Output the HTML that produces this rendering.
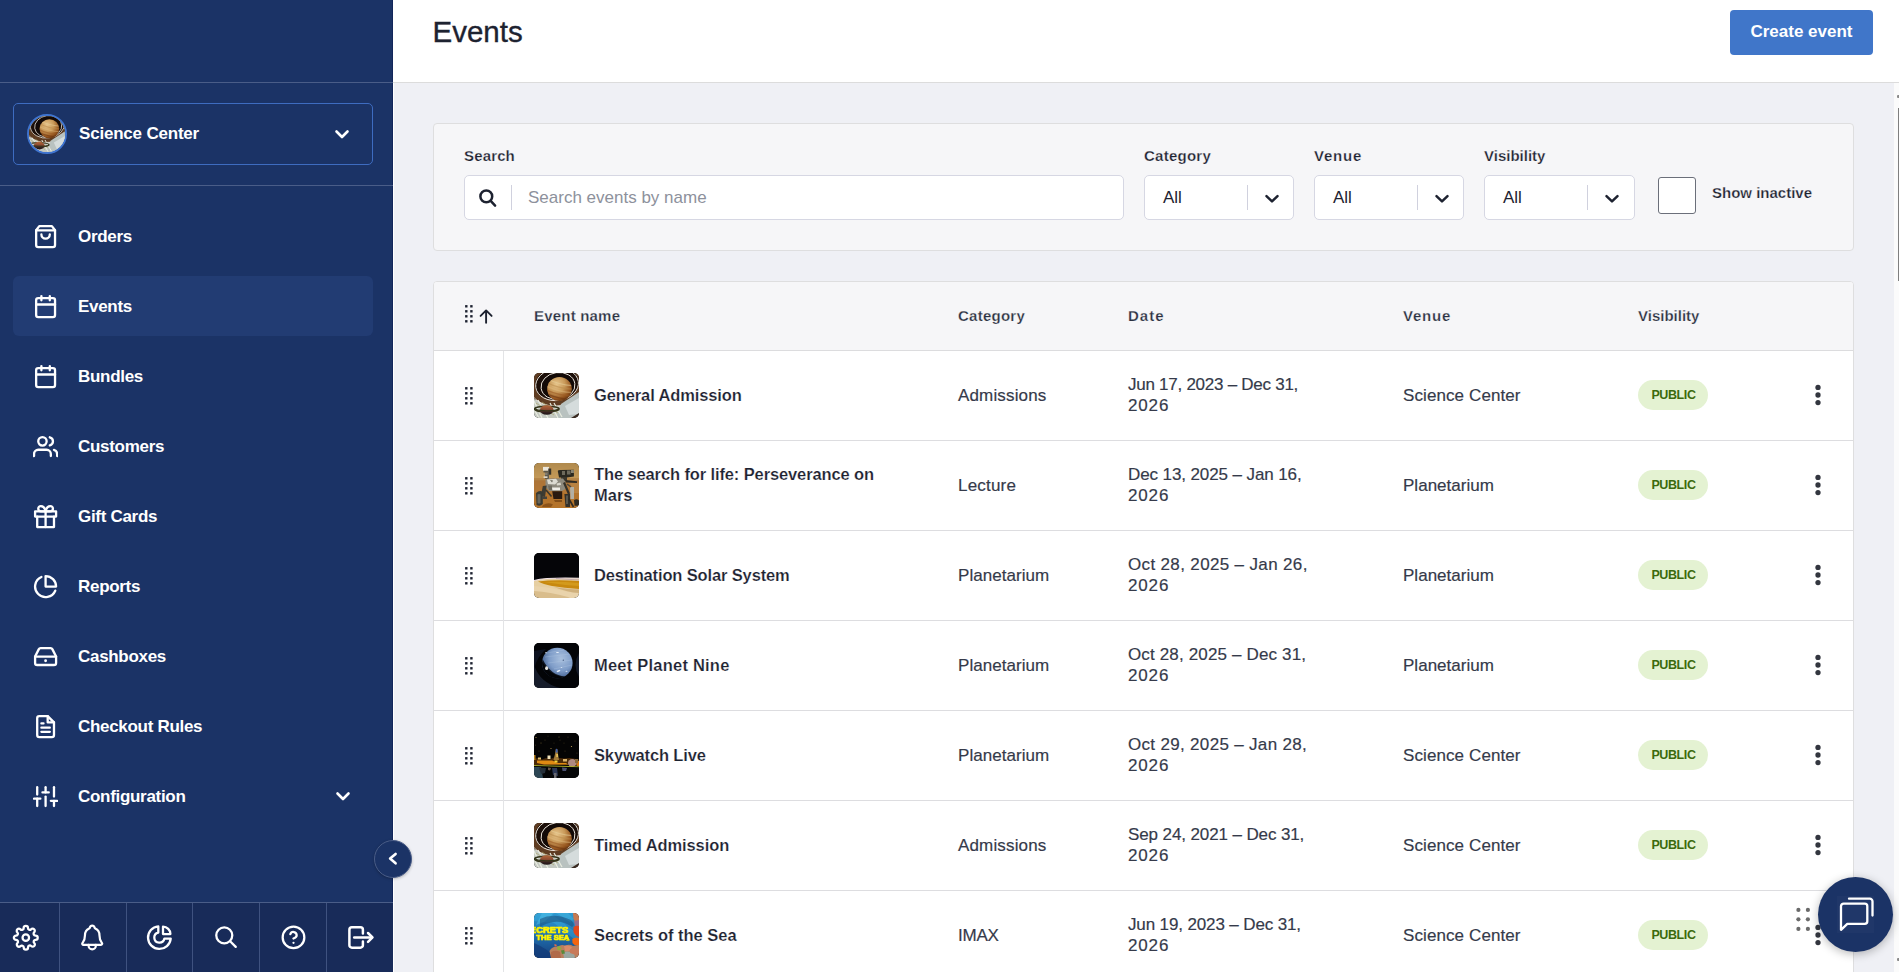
<!DOCTYPE html>
<html lang="en">
<head>
<meta charset="utf-8">
<title>Events</title>
<style>
*{box-sizing:border-box;margin:0;padding:0}
html,body{width:1899px;height:972px;overflow:hidden;background:#eff0f5;font-family:"Liberation Sans",sans-serif;color:#1d2230}
body{position:relative}
.abs{position:absolute}
/* ---------- sidebar ---------- */
#side{position:absolute;left:0;top:0;width:393px;height:972px;background:#1b3366;border-right:1px solid #12265a}
#side .hr{position:absolute;left:0;width:393px;height:1px;background:#4a5d88}
#org{position:absolute;left:13px;top:103px;width:360px;height:62px;border:1px solid #3e6cc0;border-radius:5px}
#org .av{position:absolute;left:13px;top:10px;width:40px;height:40px;border-radius:50%;border:2px solid #3f74cf;overflow:hidden;background:#c9c5b8}
#org .nm{position:absolute;left:65px;top:19px;letter-spacing:-.2px;font-size:17px;font-weight:700;color:#fff;line-height:22px;white-space:nowrap}
.nav{position:absolute;left:13px;width:360px;height:60px;border-radius:6px}
.nav.on{background:#223c73}
.nav .tx{position:absolute;left:65px;top:20px;letter-spacing:-.3px;font-size:17px;font-weight:700;color:#fff;line-height:22px;white-space:nowrap}
.nav svg.ic{position:absolute;left:20px;top:17.5px;width:25.2px;height:25.2px;fill:none;stroke:#fff;stroke-width:2.2;stroke-linecap:round;stroke-linejoin:round}
#bbar{position:absolute;left:0;top:902px;width:393px;height:70px;background:#182b59;border-top:1px solid #4a5d88}
#bbar .c{position:absolute;top:0;height:70px;border-left:1px solid #3f5280}
#bbar svg{position:absolute;fill:none;stroke:#fff;stroke-width:2.2;stroke-linecap:round;stroke-linejoin:round}
#coll{z-index:5;position:absolute;left:374px;top:839.5px;width:38px;height:38px;border-radius:50%;background:#1b3366;border:1px solid #4a5d88;box-shadow:0 1px 3px rgba(0,0,0,.25)}
/* ---------- header ---------- */
#head{position:absolute;left:393px;top:0;width:1506px;height:83px;background:#fff;border-bottom:1px solid #dcdcdc}
#wl{position:absolute;left:393px;top:83px;width:1px;height:889px;background:#fff}
#head h1{position:absolute;left:39.500px;top:14px;font-size:29.500px;font-weight:400;-webkit-text-stroke:.35px #1d2230;line-height:36px;color:#1d2230;white-space:nowrap}
#create{position:absolute;left:1730px;top:10px;width:143px;height:45px;background:#4076c9;border-radius:4px;color:#fff;font-size:17px;font-weight:700;text-align:center;line-height:43px;white-space:nowrap}
/* ---------- filter ---------- */
#filt{position:absolute;left:433px;top:123px;width:1421px;height:128px;background:#f6f6f8;border:1px solid #dededf;border-radius:4px}
.lbl{position:absolute;font-size:15px;-webkit-text-stroke:.25px #f6f6f8;font-weight:700;color:#1d2230;line-height:20px;white-space:nowrap}
.inp{position:absolute;height:45px;background:#fff;border:1px solid #d6d7e3;border-radius:5px}
.inp .v{position:absolute;left:18px;top:11px;font-size:17px;line-height:22px;color:#1d2230}
.inp .sep{position:absolute;top:9px;width:1px;height:25px;background:#d0d1de}
.inp svg{position:absolute;fill:none;stroke:#1d2230;stroke-width:2.4;stroke-linecap:round;stroke-linejoin:round}
/* ---------- table ---------- */
#tbl{position:absolute;left:433px;top:281px;width:1421px;height:720px;background:#fff;border:1px solid #dededf;border-radius:4px 4px 0 0;overflow:hidden}
#th{position:absolute;left:0;top:0;width:1419px;height:69px;background:#f6f6f8;border-bottom:1px solid #dcdcde}
#th .h{position:absolute;top:24px;font-size:15px;-webkit-text-stroke:.25px #f6f6f8;font-weight:700;color:#2a3040;line-height:20px;white-space:nowrap}
.row{position:absolute;left:0;width:1419px;height:90px;border-bottom:1px solid #dddde0;background:#fff}
.row .dv{position:absolute;left:69px;top:0;width:1px;height:90px;background:#e3e4e6}
.row .th{position:absolute;left:100px;top:22px;width:45px;height:45px;border-radius:5px;overflow:hidden;background:#000}
.row .th svg{display:block;width:45px;height:45px;filter:blur(.35px)}
.row .nm{position:absolute;left:160px;font-size:16.500px;-webkit-text-stroke:.2px #fff;font-weight:700;color:#1d2230;line-height:21px;white-space:nowrap}
.row .ct,.row .vn{position:absolute;top:34px;font-size:17px;color:#353a4a;-webkit-text-stroke:.18px #353a4a;line-height:21px;white-space:nowrap}
.row .ct{left:524px}
.row .vn{left:969px}
.row .dt{position:absolute;left:694px;top:23px;font-size:17px;color:#353a4a;-webkit-text-stroke:.18px #353a4a;line-height:21px;white-space:nowrap}
.row .pb{position:absolute;left:1204px;top:29px;width:70px;height:30px;border-radius:15px;background:#e4f2d2;color:#3c6a0c;font-size:12.500px;letter-spacing:-.4px;padding-left:1px;font-weight:700;text-align:center;line-height:30px}
.row .kb{position:absolute;left:1380px;top:32px;width:8px;height:24px;fill:#33363f}
.row .kb i{position:absolute;left:.3px;width:5.400px;height:5.400px;border-radius:50%;background:#33363f}
.grip{position:absolute;width:8px;height:18px;fill:#1d2230}
.grip i{position:absolute;width:2.5px;height:2.5px;background:#1d2230}
/* ---------- chat ---------- */
#chat{position:absolute;left:1818px;top:877px;width:75px;height:75px;border-radius:50%;background:#1b3366;box-shadow:0 2px 10px rgba(0,0,0,.28)}
#sb{position:absolute;left:1894px;top:83px;width:5px;height:889px;background:#fbfbfb}
</style>
</head>
<body>

<svg width="0" height="0" style="position:absolute">
<defs>
  <radialGradient id="gSat" cx="38%" cy="30%" r="75%"><stop offset="0" stop-color="#e6c48a"/><stop offset=".45" stop-color="#c99a5a"/><stop offset=".8" stop-color="#96561f"/><stop offset="1" stop-color="#5e300f"/></radialGradient>
  <linearGradient id="gSat2" x1="0" y1="0" x2="0" y2="1"><stop offset="0" stop-color="#b5683a"/><stop offset=".45" stop-color="#8a4a30"/><stop offset=".7" stop-color="#3a2422"/><stop offset="1" stop-color="#1c1416"/></linearGradient>
  <linearGradient id="gMars" x1="0" y1="0" x2="0" y2="1"><stop offset="0" stop-color="#b08a4e"/><stop offset=".36" stop-color="#c59a58"/><stop offset=".4" stop-color="#ad7438"/><stop offset="1" stop-color="#b97c34"/></linearGradient>
  <radialGradient id="gNep" cx="62%" cy="36%" r="70%"><stop offset="0" stop-color="#a9c0de"/><stop offset=".55" stop-color="#7e9cc8"/><stop offset=".85" stop-color="#4f6c9c"/><stop offset="1" stop-color="#2a3c60"/></radialGradient>
  <linearGradient id="gSea" x1="0" y1="0" x2="0" y2="1"><stop offset="0" stop-color="#2f9bd1"/><stop offset=".45" stop-color="#1f74b4"/><stop offset="1" stop-color="#173f7c"/></linearGradient>
  <symbol id="saturn" viewBox="0 0 45 45">
    <rect width="45" height="45" fill="#c4c9c2"/>
    <path d="M0 0H45V20L30 29L12 30L0 26Z" fill="#1b0e08"/>
    <ellipse cx="23" cy="11" rx="25" ry="19" fill="none" stroke="#5e3c22" stroke-width="5.500" transform="rotate(-8 23 11)"/>
    <ellipse cx="23" cy="11.500" rx="21.500" ry="16" fill="none" stroke="#f4efe6" stroke-width=".9" transform="rotate(-8 23 11)"/>
    <ellipse cx="23" cy="11" rx="28" ry="22" fill="none" stroke="#efe8dc" stroke-width=".8" transform="rotate(-8 23 11)"/>
    <ellipse cx="24" cy="13" rx="17" ry="13.500" fill="#120906" stroke="#f4efe6" stroke-width=".9" transform="rotate(-8 24 13)"/>
    <clipPath id="cpS"><ellipse cx="25.500" cy="16" rx="12.300" ry="12"/></clipPath><ellipse cx="25.500" cy="16" rx="12.300" ry="12" fill="url(#gSat)"/><g clip-path="url(#cpS)" fill="none" stroke-width="1.300" transform="rotate(14 25.500 16)"><path d="M10 9Q25 12.500 41 9" stroke="#e8cf9a" opacity=".55"/><path d="M10 12.500Q25 16 41 12.500" stroke="#b98a4a" opacity=".55"/><path d="M10 16Q25 19.500 41 16" stroke="#e0bd80" opacity=".45"/><path d="M10 19.500Q25 23 41 19.500" stroke="#9a5a22" opacity=".55"/><path d="M10 23Q25 26.500 41 23" stroke="#6e3610" opacity=".6"/></g>
    <path d="M27 31L45 19V45H22Z" fill="#b9c2c0"/>
    <path d="M31 33L45 25V41L35 42Z" fill="#d5dcdc"/>
    <path d="M37 45L45 40V45Z" fill="#3a2a20"/>
    <path d="M0 28L8 45M4 27L14 45M0 36L5 45M16 30L24 45M20 30L28 44" stroke="#e9ecdf" stroke-width="1.200"/>
    <path d="M2 30L20 42M8 29L24 40" stroke="#a9a36a" stroke-width=".7"/>
    <ellipse cx="12.800" cy="36" rx="12.300" ry="2.700" fill="none" stroke="#34341a" stroke-width="1.500"/>
    <ellipse cx="12.800" cy="37" rx="6.800" ry="4.800" fill="url(#gSat2)"/>
    <path d="M.8 35.200A12.300 2.700 0 0 0 25 35.800" fill="none" stroke="#34341a" stroke-width="1.300"/>
  </symbol>
</defs>
</svg>

<!-- ================= SIDEBAR ================= -->
<div id="side">
  <div class="hr" style="top:82px"></div>
  <div id="org">
    <div class="av"><svg viewBox="0 0 45 45" style="display:block;width:36px;height:36px"><use href="#saturn" width="45" height="45"/></svg></div>
    <div class="nm">Science Center</div><svg viewBox="0 0 24 24" style="position:absolute;left:316px;top:18px;width:24px;height:24px;fill:none;stroke:#fff;stroke-width:2.6;stroke-linecap:round;stroke-linejoin:round"><polyline points="6.500 9.500 12 15 17.500 9.500"/></svg>
  </div>
  <div class="hr" style="top:185px"></div>

  <div class="nav" style="top:206px"><svg class="ic" viewBox="0 0 24 24"><path d="M6 2L3 6v14a2 2 0 0 0 2 2h14a2 2 0 0 0 2-2V6l-3-4z"/><line x1="3" y1="6" x2="21" y2="6"/><path d="M16 10a4 4 0 0 1-8 0"/></svg><div class="tx">Orders</div></div>
  <div class="nav on" style="top:276px"><svg class="ic" viewBox="0 0 24 24"><rect x="3" y="4" width="18" height="18" rx="2" ry="2"/><line x1="16" y1="2" x2="16" y2="6"/><line x1="8" y1="2" x2="8" y2="6"/><line x1="3" y1="10" x2="21" y2="10"/></svg><div class="tx">Events</div></div>
  <div class="nav" style="top:346px"><svg class="ic" viewBox="0 0 24 24"><rect x="3" y="4" width="18" height="18" rx="2" ry="2"/><line x1="16" y1="2" x2="16" y2="6"/><line x1="8" y1="2" x2="8" y2="6"/><line x1="3" y1="10" x2="21" y2="10"/></svg><div class="tx">Bundles</div></div>
  <div class="nav" style="top:416px"><svg class="ic" viewBox="0 0 24 24"><path d="M17 21v-2a4 4 0 0 0-4-4H5a4 4 0 0 0-4 4v2"/><circle cx="9" cy="7" r="4"/><path d="M23 21v-2a4 4 0 0 0-3-3.87"/><path d="M16 3.13a4 4 0 0 1 0 7.75"/></svg><div class="tx">Customers</div></div>
  <div class="nav" style="top:486px"><svg class="ic" viewBox="0 0 24 24"><polyline points="20 12 20 22 4 22 4 12"/><rect x="2" y="7" width="20" height="5"/><line x1="12" y1="22" x2="12" y2="7"/><path d="M12 7H7.5a2.5 2.5 0 0 1 0-5C11 2 12 7 12 7z"/><path d="M12 7h4.500a2.5 2.5 0 0 0 0-5C13 2 12 7 12 7z"/></svg><div class="tx">Gift Cards</div></div>
  <div class="nav" style="top:556px"><svg class="ic" viewBox="0 0 24 24"><path d="M21.21 15.89A10 10 0 1 1 8 2.83"/><path d="M22 12A10 10 0 0 0 12 2v10z"/></svg><div class="tx">Reports</div></div>
  <div class="nav" style="top:626px"><svg class="ic" viewBox="0 0 24 24"><line x1="22" y1="12" x2="2" y2="12"/><path d="M5.45 5.11L2 12v6a2 2 0 0 0 2 2h16a2 2 0 0 0 2-2v-6l-3.45-6.890A2 2 0 0 0 16.76 4H7.24a2 2 0 0 0-1.79 1.11z"/><circle cx="12" cy="16" r="1.35" fill="#fff" stroke="none"/></svg><div class="tx">Cashboxes</div></div>
  <div class="nav" style="top:696px"><svg class="ic" viewBox="0 0 24 24"><path d="M14 2H6a2 2 0 0 0-2 2v16a2 2 0 0 0 2 2h12a2 2 0 0 0 2-2V8z"/><polyline points="14 2 14 8 20 8"/><line x1="16" y1="13" x2="8" y2="13"/><line x1="16" y1="17" x2="8" y2="17"/><polyline points="10 9 9 9 8 9"/></svg><div class="tx">Checkout Rules</div></div>
  <div class="nav" style="top:766px"><svg class="ic" viewBox="0 0 24 24"><line x1="4" y1="21" x2="4" y2="14"/><line x1="4" y1="10" x2="4" y2="3"/><line x1="12" y1="21" x2="12" y2="12"/><line x1="12" y1="8" x2="12" y2="3"/><line x1="20" y1="21" x2="20" y2="16"/><line x1="20" y1="12" x2="20" y2="3"/><line x1="1" y1="14" x2="7" y2="14"/><line x1="9" y1="8" x2="15" y2="8"/><line x1="17" y1="16" x2="23" y2="16"/></svg><div class="tx">Configuration</div><svg viewBox="0 0 24 24" style="position:absolute;left:318px;top:18px;width:24px;height:24px;fill:none;stroke:#fff;stroke-width:2.6;stroke-linecap:round;stroke-linejoin:round"><polyline points="6.500 9.500 12 15 17.500 9.500"/></svg></div>

  <div id="bbar">
    <div class="c" style="left:59px;width:67px"></div>
    <div class="c" style="left:126px;width:67px"></div>
    <div class="c" style="left:192px;width:67px"></div>
    <div class="c" style="left:259px;width:67px"></div>
    <div class="c" style="left:326px;width:67px"></div>
  </div>
</div>
<svg id="bico" viewBox="0 900 393 72" style="position:absolute;left:0;top:900px;width:393px;height:72px;fill:none;stroke:#fff;stroke-linecap:round;stroke-linejoin:round"><g transform="translate(12.80 924.70) scale(1.0833)" stroke-width="2.1"><circle cx="12" cy="12" r="3"/><path d="M19.4 15a1.65 1.65 0 0 0 .33 1.82l.06.06a2 2 0 0 1 0 2.83 2 2 0 0 1-2.83 0l-.06-.06a1.65 1.65 0 0 0-1.82-.33 1.65 1.65 0 0 0-1 1.51V21a2 2 0 0 1-2 2 2 2 0 0 1-2-2v-.09A1.65 1.65 0 0 0 9 19.4a1.65 1.65 0 0 0-1.82.33l-.06.06a2 2 0 0 1-2.83 0 2 2 0 0 1 0-2.83l.06-.06a1.65 1.65 0 0 0 .33-1.82 1.65 1.65 0 0 0-1.51-1H3a2 2 0 0 1-2-2 2 2 0 0 1 2-2h.09A1.65 1.65 0 0 0 4.6 9a1.65 1.65 0 0 0-.33-1.82l-.06-.06a2 2 0 0 1 0-2.83 2 2 0 0 1 2.83 0l.06.06a1.65 1.65 0 0 0 1.82.33H9a1.65 1.65 0 0 0 1-1.51V3a2 2 0 0 1 2-2 2 2 0 0 1 2 2v.09a1.65 1.65 0 0 0 1 1.51 1.65 1.65 0 0 0 1.82-.33l.06-.06a2 2 0 0 1 2.83 0 2 2 0 0 1 0 2.83l-.06.06a1.65 1.65 0 0 0-.33 1.82V9a1.65 1.65 0 0 0 1.51 1H21a2 2 0 0 1 2 2 2 2 0 0 1-2 2h-.09a1.65 1.65 0 0 0-1.51 1z"/></g><g transform="translate(77.700 923) scale(.0567)" stroke-width="39"><path d="M427.680 351.430C402 320 383.870 304 383.870 217.350 383.870 138 343.350 109.730 310 96c-4.430-1.820-8.600-6-9.950-10.550C294.200 65.540 277.800 48 256 48s-38.210 17.550-44 37.470c-1.350 4.600-5.520 8.710-9.950 10.530-33.390 13.750-73.870 41.920-73.870 121.350C128.130 304 110 320 84.320 351.430 73.680 364.450 83 384 101.610 384h308.880c18.510 0 27.770-19.610 17.190-32.570z"/><path d="M320 384v16a64 64 0 0 1-128 0v-16"/></g><g transform="translate(159.4 937.6)" stroke-width="2.3"><path d="M-1.1 -11.3L-1.1 -5A5.1 5.1 0 1 0 5 1L11.3 1A11.35 11.35 0 1 1 -1.1 -11.3Z"/><path d="M3.6 -3.5L3.6 -10.9A7.4 7.4 0 0 1 11 -3.5Z"/></g><g transform="translate(213.00 924.10) scale(1.0833)" stroke-width="2.1"><circle cx="10.400" cy="10.400" r="7.400"/><line x1="21" y1="21" x2="15.800" y2="15.800"/></g><g transform="translate(280.50 924.40) scale(1.0833)" stroke-width="2.1"><circle cx="12" cy="12" r="10"/><path d="M9.09 9a3 3 0 0 1 5.83 1c0 2-3 3-3 3"/><line x1="12" y1="17" x2="12.01" y2="17"/></g><g stroke-width="2.5"><path d="M362.9 933.5V929.8a2.5 2.5 0 0 0-2.5-2.500H351.9a2.5 2.5 0 0 0-2.5 2.500V945.2a2.5 2.5 0 0 0 2.5 2.500H360.4a2.5 2.500 0 0 0 2.5-2.500V941.500"/><path d="M354.2 937.45H371.5"/><path d="M368 933L372.500 937.45L368 941.900"/></g></svg>
<div id="coll"><svg viewBox="0 0 38 38" style="position:absolute;left:-1px;top:-1px;width:38px;height:38px;fill:none;stroke:#fff;stroke-width:2.6;stroke-linecap:round;stroke-linejoin:round"><path d="M21.600 13.900L16.100 18.600L21.600 23.300"/></svg></div>

<!-- ================= HEADER ================= -->
<div id="head"><h1>Events</h1></div><div id="wl"></div>
<div id="create">Create event</div>

<!-- ================= FILTER ================= -->
<div id="filt"></div>
<div class="lbl" style="left:464px;top:146px;letter-spacing:.15px">Search</div>
<div class="inp" id="srch" style="left:464px;top:175px;width:660px">
  <svg viewBox="0 0 30 30" style="left:6px;top:6px;width:30px;height:30px;stroke-width:2.5"><circle cx="15.300" cy="14.400" r="5.900"/><path d="M19.700 18.900L24.100 23.600"/></svg><div class="sep" style="left:46px"></div>
  <div class="v" style="left:63px;color:#8d919c">Search events by name</div>
</div>
<div class="lbl" style="left:1144px;top:146px;letter-spacing:.25px">Category</div>
<div class="inp" style="left:1144px;top:175px;width:150px"><div class="v">All</div><div class="sep" style="left:102px"></div><svg viewBox="0 0 20 20" style="left:117px;top:12.600px;width:20px;height:20px;stroke-width:2.5"><path d="M4.500 7.100L10 12.400L15.500 7.100"/></svg></div>
<div class="lbl" style="left:1314px;top:146px;letter-spacing:.8px">Venue</div>
<div class="inp" style="left:1314px;top:175px;width:150px"><div class="v">All</div><div class="sep" style="left:102px"></div><svg viewBox="0 0 20 20" style="left:117px;top:12.600px;width:20px;height:20px;stroke-width:2.5"><path d="M4.500 7.100L10 12.400L15.500 7.100"/></svg></div>
<div class="lbl" style="left:1484px;top:146px">Visibility</div>
<div class="inp" style="left:1484px;top:175px;width:151px"><div class="v">All</div><div class="sep" style="left:102px"></div><svg viewBox="0 0 20 20" style="left:117px;top:12.600px;width:20px;height:20px;stroke-width:2.5"><path d="M4.500 7.100L10 12.400L15.500 7.100"/></svg></div>
<div class="abs" style="left:1658px;top:177px;width:38px;height:37px;background:#fff;border:1px solid #6b6f7a;border-radius:3px"></div>
<div class="lbl" style="left:1712px;top:183px">Show inactive</div>

<!-- ================= TABLE ================= -->
<div id="tbl">
  <div id="th"><svg class="grip" viewBox="0 0 8 18" style="left:30.8px;top:22.7px"><rect x="0.1" y="0.1" width="2.400" height="2.400"/><rect x="5.2" y="0.1" width="2.400" height="2.400"/><rect x="0.1" y="5.1" width="2.400" height="2.400"/><rect x="5.2" y="5.1" width="2.400" height="2.400"/><rect x="0.1" y="10.1" width="2.400" height="2.400"/><rect x="5.2" y="10.1" width="2.400" height="2.400"/><rect x="0.1" y="15.1" width="2.400" height="2.400"/><rect x="5.2" y="15.1" width="2.400" height="2.400"/></svg><svg viewBox="0 0 16 18" style="position:absolute;left:44px;top:25px;width:16px;height:18px;fill:none;stroke:#1d2230;stroke-width:1.9;stroke-linecap:round;stroke-linejoin:round"><path d="M8.100 15.800V3.400M2.600 8.900L8.100 3.400L13.600 8.900"/></svg>
    <div class="h" style="left:100px;letter-spacing:.2px">Event name</div>
    <div class="h" style="left:524px;letter-spacing:.25px">Category</div>
    <div class="h" style="left:694px;letter-spacing:1px">Date</div>
    <div class="h" style="left:969px;letter-spacing:.8px">Venue</div>
    <div class="h" style="left:1204px">Visibility</div>
  </div>

  <div class="row" style="top:69px">
    <svg class="grip" viewBox="0 0 8 18" style="left:30.8px;top:35.7px"><rect x="0.1" y="0.1" width="2.400" height="2.400"/><rect x="5.2" y="0.1" width="2.400" height="2.400"/><rect x="0.1" y="5.1" width="2.400" height="2.400"/><rect x="5.2" y="5.1" width="2.400" height="2.400"/><rect x="0.1" y="10.1" width="2.400" height="2.400"/><rect x="5.2" y="10.1" width="2.400" height="2.400"/><rect x="0.1" y="15.1" width="2.400" height="2.400"/><rect x="5.2" y="15.1" width="2.400" height="2.400"/></svg><div class="dv"></div><div class="th" id="t1"><svg viewBox="0 0 45 45"><use href="#saturn"/></svg></div>
    <div class="nm" style="top:34px"><span style="letter-spacing:-0.12px">General Admission</span></div>
    <div class="ct" style="letter-spacing:.15px">Admissions</div>
    <div class="dt"><span style="letter-spacing:-0.26px">Jun 17, 2023 – Dec 31,</span><br><span style="letter-spacing:.85px">2026</span></div>
    <div class="vn" style="letter-spacing:.1px">Science Center</div>
    <div class="pb">PUBLIC</div>
    <svg class="kb" viewBox="0 0 8 24"><circle cx="4" cy="4.400" r="2.650"/><circle cx="4" cy="12" r="2.650"/><circle cx="4" cy="19.600" r="2.650"/></svg>
  </div>
  <div class="row" style="top:159px">
    <svg class="grip" viewBox="0 0 8 18" style="left:30.8px;top:35.7px"><rect x="0.1" y="0.1" width="2.400" height="2.400"/><rect x="5.2" y="0.1" width="2.400" height="2.400"/><rect x="0.1" y="5.1" width="2.400" height="2.400"/><rect x="5.2" y="5.1" width="2.400" height="2.400"/><rect x="0.1" y="10.1" width="2.400" height="2.400"/><rect x="5.2" y="10.1" width="2.400" height="2.400"/><rect x="0.1" y="15.1" width="2.400" height="2.400"/><rect x="5.2" y="15.1" width="2.400" height="2.400"/></svg><div class="dv"></div><div class="th" id="t2"><svg viewBox="0 0 45 45" style="filter:blur(.5px)"><rect width="45" height="45" fill="url(#gMars)"/><path d="M0 15H45V18H0Z" fill="#a8743a" opacity=".55"/><path d="M0 30H45V45H0Z" fill="#b26c22" opacity=".45"/><path d="M36 19Q41 18 45 20V30H38Z" fill="#c08a48" opacity=".6"/><path d="M9 3.900H15V7.800H9Z" fill="#ebe6da"/><path d="M14.300 5.500H17.200V11.700H14.300Z" fill="#35322a"/><path d="M9.500 7.800H15V9.500H9.500Z" fill="#5a564a"/><path d="M11 9.500H15V16H11Z" fill="#5e5a4e"/><path d="M9.600 13.300H13.500V15H9.600Z" fill="#ddd6c8"/><path d="M10.500 10.500H13.500V11.500H10.500Z" fill="#a8a294"/><path d="M23.800 8Q24 6.800 27 7L39.900 6.800V13.500L33 14.400H25Z" fill="#2a2820"/><path d="M28 8H31V12H28ZM33 7.500H36.500V11.500H33Z" fill="#6e6a5c"/><path d="M37 7H39.900V10H37Z" fill="#8a8676"/><path d="M27 14H33V18H27Z" fill="#3a362c"/><path d="M11.500 17L15 15.500H29L31.500 19V26L28 28H15L11.500 24Z" fill="#8e8a7e"/><path d="M13 16.500L22 15.800L24 18.500L21 21.500L14 21Z" fill="#dddbd2"/><path d="M16 17L19 17.500L18 19.500Z" fill="#6a675c"/><path d="M22.500 20.500L26.500 19.500L27 22L23 22.500Z" fill="#d9d6cc"/><path d="M18 24.500H26V27.200H18.500Z" fill="#f0eee8"/><path d="M14 22.500H18V27H15Z" fill="#6e6b60"/><path d="M18.200 28.300H28.200V36H19.500Z" fill="#2a1a10"/><path d="M31.500 17L43 18.200V20L31.500 19.500Z" fill="#2e2b24"/><path d="M30 19.500L35 31" stroke="#34312a" stroke-width="2.200"/><path d="M36 24H40V36H36.500Z" fill="#b3afa3"/><path d="M33 21L37 24" stroke="#4a463c" stroke-width="1.500"/><path d="M8.800 23L12.700 22.500L11 34L7 33Z" fill="#3e3b32"/><path d="M12 27L17.500 33.500" stroke="#3a362c" stroke-width="1.600"/><path d="M2 30Q5 27 8.800 28.500V41Q6 44 2.500 42Z" fill="#3a3a32"/><path d="M3.500 31.500Q5 30.500 6.500 31.500V40Q5 41 3.500 40Z" fill="#67655a"/><path d="M8 33.500H13V36H8Z" fill="#45423a"/><path d="M30.400 31H36V43.900H31.500Z" fill="#33302a"/><path d="M32 32.500H34V41H32Z" fill="#5a574c"/><path d="M40 37Q43 35.500 45 37.500V42.800H40.500Z" fill="#2e2a22"/><path d="M35 36L39.500 44" stroke="#2e2a22" stroke-width="1.600"/><path d="M9 42Q14 39 19 41.500L17 44H8Z" fill="#7a4612" opacity=".7"/><path d="M20 37H28V39H21Z" fill="#6e3e10" opacity=".7"/></svg></div>
    <div class="nm" style="top:23px"><span style="letter-spacing:-0.12px">The search for life: Perseverance on</span><br>Mars</div>
    <div class="ct" style="letter-spacing:.2px">Lecture</div>
    <div class="dt"><span style="letter-spacing:-0.1px">Dec 13, 2025 – Jan 16,</span><br><span style="letter-spacing:.85px">2026</span></div>
    <div class="vn" style="letter-spacing:.02px">Planetarium</div>
    <div class="pb">PUBLIC</div>
    <svg class="kb" viewBox="0 0 8 24"><circle cx="4" cy="4.400" r="2.650"/><circle cx="4" cy="12" r="2.650"/><circle cx="4" cy="19.600" r="2.650"/></svg>
  </div>
  <div class="row" style="top:249px">
    <svg class="grip" viewBox="0 0 8 18" style="left:30.8px;top:35.7px"><rect x="0.1" y="0.1" width="2.400" height="2.400"/><rect x="5.2" y="0.1" width="2.400" height="2.400"/><rect x="0.1" y="5.1" width="2.400" height="2.400"/><rect x="5.2" y="5.1" width="2.400" height="2.400"/><rect x="0.1" y="10.1" width="2.400" height="2.400"/><rect x="5.2" y="10.1" width="2.400" height="2.400"/><rect x="0.1" y="15.1" width="2.400" height="2.400"/><rect x="5.2" y="15.1" width="2.400" height="2.400"/></svg><div class="dv"></div><div class="th" id="t3"><svg viewBox="0 0 45 45"><rect width="45" height="45" fill="#050508"/><path d="M0 27.500Q14 24.300 45 25.300V45H0Z" fill="#e6cfa2"/><path d="M4 28.500Q20 26.500 45 28V36Q30 35 18 33Q9 31 4 28.500Z" fill="#c8890f"/><path d="M10 29Q24 28 45 30V33Q28 32 10 29Z" fill="#d39a1c"/><path d="M0 33Q14 34 30 38Q40 40 45 40V45H0Z" fill="#e9d3ab"/><path d="M0 38Q16 39 34 44L36 45H0Z" fill="#d9bd8c"/><path d="M20 34Q34 36 45 36.500V40Q34 39.500 20 34Z" fill="#c9a873" opacity=".8"/><path d="M0 27.500Q14 24.300 45 25.300" stroke="#f3e4ea" stroke-width="1.100" fill="none"/><path d="M22 25.500Q34 26.300 45 27" stroke="#b9a0b0" stroke-width="1.200" fill="none" opacity=".8"/></svg></div>
    <div class="nm" style="top:34px"><span style="letter-spacing:-0.14px">Destination Solar System</span></div>
    <div class="ct" style="letter-spacing:.04px">Planetarium</div>
    <div class="dt"><span style="letter-spacing:0.35px">Oct 28, 2025 – Jan 26,</span><br><span style="letter-spacing:.85px">2026</span></div>
    <div class="vn" style="letter-spacing:.02px">Planetarium</div>
    <div class="pb">PUBLIC</div>
    <svg class="kb" viewBox="0 0 8 24"><circle cx="4" cy="4.400" r="2.650"/><circle cx="4" cy="12" r="2.650"/><circle cx="4" cy="19.600" r="2.650"/></svg>
  </div>
  <div class="row" style="top:339px">
    <svg class="grip" viewBox="0 0 8 18" style="left:30.8px;top:35.7px"><rect x="0.1" y="0.1" width="2.400" height="2.400"/><rect x="5.2" y="0.1" width="2.400" height="2.400"/><rect x="0.1" y="5.1" width="2.400" height="2.400"/><rect x="5.2" y="5.1" width="2.400" height="2.400"/><rect x="0.1" y="10.1" width="2.400" height="2.400"/><rect x="5.2" y="10.1" width="2.400" height="2.400"/><rect x="0.1" y="15.1" width="2.400" height="2.400"/><rect x="5.2" y="15.1" width="2.400" height="2.400"/></svg><div class="dv"></div><div class="th" id="t4"><svg viewBox="0 0 45 45"><rect width="45" height="45" fill="#030407"/><path d="M0 22Q6 40 26 45H0Z" fill="#161c2a"/><path d="M45 10Q38 22 45 34Z" fill="#141a28"/><path d="M0 26Q3 14 12 6L0 8Z" fill="#0d1220"/><circle cx="23.300" cy="20" r="15.300" fill="url(#gNep)"/><path d="M8.500 16A15.300 15.300 0 0 0 31 33.200Q17 33 8.500 16Z" fill="#05070c" opacity=".85"/><path d="M8.200 18.500A15.300 15.300 0 0 0 29 34.200Q15 32 8.200 18.500Z" fill="#030407"/><path d="M13 10L30 7M11 14L36 11M14 20L38 17M20 26L38 22" stroke="#b9cde6" stroke-width=".8" opacity=".35"/><ellipse cx="23.500" cy="9.500" rx="1.500" ry=".6" fill="#e8f0fa"/><ellipse cx="12" cy="9.800" rx="1" ry=".5" fill="#dfe8f6"/><ellipse cx="24.500" cy="28" rx="2" ry=".8" fill="#e8f0fa" transform="rotate(-25 24.500 28)"/><ellipse cx="32.500" cy="28.300" rx="1" ry=".5" fill="#dfe8f6"/><ellipse cx="27.500" cy="24.500" rx=".9" ry=".45" fill="#dfe8f6"/><circle cx="29.300" cy="17.200" r=".6" fill="#3a4e70"/><ellipse cx="12.600" cy="25.200" rx="1.500" ry="1.900" fill="#e6e6e2"/></svg></div>
    <div class="nm" style="top:34px"><span style="letter-spacing:0.22px">Meet Planet Nine</span></div>
    <div class="ct" style="letter-spacing:.04px">Planetarium</div>
    <div class="dt"><span style="letter-spacing:0.15px">Oct 28, 2025 – Dec 31,</span><br><span style="letter-spacing:.85px">2026</span></div>
    <div class="vn" style="letter-spacing:.02px">Planetarium</div>
    <div class="pb">PUBLIC</div>
    <svg class="kb" viewBox="0 0 8 24"><circle cx="4" cy="4.400" r="2.650"/><circle cx="4" cy="12" r="2.650"/><circle cx="4" cy="19.600" r="2.650"/></svg>
  </div>
  <div class="row" style="top:429px">
    <svg class="grip" viewBox="0 0 8 18" style="left:30.8px;top:35.7px"><rect x="0.1" y="0.1" width="2.400" height="2.400"/><rect x="5.2" y="0.1" width="2.400" height="2.400"/><rect x="0.1" y="5.1" width="2.400" height="2.400"/><rect x="5.2" y="5.1" width="2.400" height="2.400"/><rect x="0.1" y="10.1" width="2.400" height="2.400"/><rect x="5.2" y="10.1" width="2.400" height="2.400"/><rect x="0.1" y="15.1" width="2.400" height="2.400"/><rect x="5.2" y="15.1" width="2.400" height="2.400"/></svg><div class="dv"></div><div class="th" id="t5"><svg viewBox="0 0 45 45"><rect width="45" height="45" fill="#040404"/><g fill="#c9a85a"><circle cx="2" cy="4.500" r=".5"/><circle cx="7" cy="10" r=".4"/><circle cx="11" cy="7" r=".35"/><circle cx="17" cy="15.500" r=".5"/><circle cx="25" cy="4" r=".4"/><circle cx="26" cy="7" r=".35"/><circle cx="37.500" cy="13.500" r=".6"/><circle cx="34" cy="4" r=".35"/><circle cx="41" cy="8" r=".35"/><circle cx="14" cy="3" r=".3"/><circle cx="20" cy="10" r=".3"/><circle cx="31" cy="18" r=".35"/><circle cx="5" cy="18" r=".35"/><circle cx="43" cy="20" r=".35"/><circle cx="30" cy="10" r=".3"/><circle cx="1.500" cy="12" r=".3"/></g><path d="M0 26L4 25L8 26.500L12 25L16 26L20 24.500L30 25.500L36 25L45 26.500V32H0Z" fill="#4a2a08"/><path d="M3 27.500H18L24 30H32L34 31.500H10L3 30Z" fill="#e08a12"/><path d="M0 22H1.500V27H0Z" fill="#b9821c"/><path d="M42.500 28H45V33H42.500Z" fill="#d87a10"/><path d="M13.500 22.500H16.500V26H13.500Z" fill="#f1e2b8"/><path d="M4 24.500H7V26.500H4Z" fill="#e0c070"/><path d="M21.800 16L23.300 16L24 21L25 27H19.500L21 21Z" fill="#a07a3a"/><path d="M22 15.500L23.500 16.500L23.700 19.500L21.600 19.500Z" fill="#3d5fae"/><path d="M22.300 21H24V24H22.300Z" fill="#e8c25a"/><path d="M29 26H33V28.500H29Z" fill="#d9b36a"/><path d="M20.500 27.500H23.500V29.500H20.500Z" fill="#f3d23a"/><ellipse cx="38.300" cy="30" rx="4.300" ry="4" fill="#b08a80"/><path d="M41 26H44V30H41Z" fill="#8a6a3a"/><path d="M0 32.500L45 33.800" stroke="#b5b82a" stroke-width=".9"/><path d="M0 33.500L45 34.800V45H0Z" fill="#050607"/><path d="M0 34L7 34L9 45H0Z" fill="#2d4654"/><path d="M5 34.500L12 35L11 40L7 41Z" fill="#26303a"/><path d="M18 35L23 35L24 43L19 42Z" fill="#2a3654"/><path d="M28 34.500L33 35L32 38L28.500 38Z" fill="#4a5070"/><path d="M20 40H22.500V45H20Z" fill="#6a6a70"/><path d="M14 34.500L17 35L16 37.500L14 37Z" fill="#6a5848"/></svg></div>
    <div class="nm" style="top:34px"><span style="letter-spacing:-0.15px">Skywatch Live</span></div>
    <div class="ct" style="letter-spacing:.04px">Planetarium</div>
    <div class="dt"><span style="letter-spacing:0.32px">Oct 29, 2025 – Jan 28,</span><br><span style="letter-spacing:.85px">2026</span></div>
    <div class="vn" style="letter-spacing:.1px">Science Center</div>
    <div class="pb">PUBLIC</div>
    <svg class="kb" viewBox="0 0 8 24"><circle cx="4" cy="4.400" r="2.650"/><circle cx="4" cy="12" r="2.650"/><circle cx="4" cy="19.600" r="2.650"/></svg>
  </div>
  <div class="row" style="top:519px">
    <svg class="grip" viewBox="0 0 8 18" style="left:30.8px;top:35.7px"><rect x="0.1" y="0.1" width="2.400" height="2.400"/><rect x="5.2" y="0.1" width="2.400" height="2.400"/><rect x="0.1" y="5.1" width="2.400" height="2.400"/><rect x="5.2" y="5.1" width="2.400" height="2.400"/><rect x="0.1" y="10.1" width="2.400" height="2.400"/><rect x="5.2" y="10.1" width="2.400" height="2.400"/><rect x="0.1" y="15.1" width="2.400" height="2.400"/><rect x="5.2" y="15.1" width="2.400" height="2.400"/></svg><div class="dv"></div><div class="th" id="t6"><svg viewBox="0 0 45 45"><use href="#saturn"/></svg></div>
    <div class="nm" style="top:34px"><span style="letter-spacing:-0.1px">Timed Admission</span></div>
    <div class="ct" style="letter-spacing:.15px">Admissions</div>
    <div class="dt"><span style="letter-spacing:-0.11px">Sep 24, 2021 – Dec 31,</span><br><span style="letter-spacing:.85px">2026</span></div>
    <div class="vn" style="letter-spacing:.1px">Science Center</div>
    <div class="pb">PUBLIC</div>
    <svg class="kb" viewBox="0 0 8 24"><circle cx="4" cy="4.400" r="2.650"/><circle cx="4" cy="12" r="2.650"/><circle cx="4" cy="19.600" r="2.650"/></svg>
  </div>
  <div class="row" style="top:609px">
    <svg class="grip" viewBox="0 0 8 18" style="left:30.8px;top:35.7px"><rect x="0.1" y="0.1" width="2.400" height="2.400"/><rect x="5.2" y="0.1" width="2.400" height="2.400"/><rect x="0.1" y="5.1" width="2.400" height="2.400"/><rect x="5.2" y="5.1" width="2.400" height="2.400"/><rect x="0.1" y="10.1" width="2.400" height="2.400"/><rect x="5.2" y="10.1" width="2.400" height="2.400"/><rect x="0.1" y="15.1" width="2.400" height="2.400"/><rect x="5.2" y="15.1" width="2.400" height="2.400"/></svg><div class="dv"></div><div class="th" id="t7"><svg viewBox="0 0 45 45"><rect width="45" height="45" fill="url(#gSea)"/><path d="M0 0L16 0L45 22V30L20 10L0 8Z" fill="#3fb5e2" opacity=".35"/><path d="M8 0H20L10 9L2 12Z" fill="#53c4ea" opacity=".45"/><path d="M22 0H34L40 6L36 9Z" fill="#49bde6" opacity=".4"/><path d="M6 6Q20 -1 37 7Q42 12 38 14Q30 8 20 9Q12 10 6 14Z" fill="#1c4f7a" opacity=".55"/><path d="M0 30Q14 36 22 45H0Z" fill="#123a78" opacity=".7"/><g font-family="Liberation Sans, sans-serif" font-weight="700" fill="#fff200" stroke="#fff200" stroke-width=".7" stroke-linejoin="round"><text x="-4.200" y="20" font-size="8.800" textLength="38.500" lengthAdjust="spacingAndGlyphs">ECRETS</text><text x="2.300" y="27.200" font-size="6.600" textLength="33" lengthAdjust="spacingAndGlyphs">THE SEA</text></g><path d="M32 27.200Q34.500 28.500 35.800 26.800" stroke="#e6d800" stroke-width=".9" fill="none"/><path d="M39 0H45V12L42 10L39.500 6Z" fill="#c87a50"/><path d="M40 8L45 7V14L41 13Z" fill="#9a6a8a"/><path d="M39.500 14Q42 12 45 13V24Q41 23 39.500 19Z" fill="#e2471c"/><path d="M38.300 26Q41 23.500 45 25V33Q41 33.500 38.500 30Z" fill="#f2650f"/><path d="M15.500 38Q18 33 24 33.500Q27 31 31 32.500Q36 31 39 33L45 32V45H17Z" fill="#b9805e"/><path d="M23 33.500Q26 32.500 27.500 35.500Q26 38 23.500 37Z" fill="#8fae3a"/><path d="M20 31.500Q22 30.500 23 32.500L21 33.500Z" fill="#e06a4a"/><path d="M30 33Q35 31.500 38 34.500Q36 39 31 38Z" fill="#d98a6a"/><path d="M17 39Q22 36.500 26 39L27 45H17Z" fill="#b06a4a"/><path d="M29 39Q35 37.500 40 40L41 45H30Z" fill="#9aa6a0"/><path d="M36 36Q41 34 45 36V42Q40 42 36 40Z" fill="#c87a5a"/><path d="M27 37.500L30 37L31 40.500L28 41Z" fill="#5a8a3a"/></svg></div>
    <div class="nm" style="top:34px"><span style="letter-spacing:-0.03px">Secrets of the Sea</span></div>
    <div class="ct" style="letter-spacing:-.2px">IMAX</div>
    <div class="dt"><span style="letter-spacing:-0.13px">Jun 19, 2023 – Dec 31,</span><br><span style="letter-spacing:.85px">2026</span></div>
    <div class="vn" style="letter-spacing:.1px">Science Center</div>
    <div class="pb">PUBLIC</div>
    <svg class="kb" viewBox="0 0 8 24"><circle cx="4" cy="4.400" r="2.650"/><circle cx="4" cy="12" r="2.650"/><circle cx="4" cy="19.600" r="2.650"/></svg>
  </div>
</div>

<!-- ================= FLOATING ================= -->
<svg viewBox="1794 905 20 30" style="position:absolute;left:1794px;top:905px;width:20px;height:30px;fill:#6a6a6a"><circle cx="1798.4" cy="909.9" r="2.100"/><circle cx="1798.4" cy="919.3" r="2.100"/><circle cx="1798.4" cy="928.9" r="2.100"/><circle cx="1807.9" cy="909.9" r="2.100"/><circle cx="1807.9" cy="919.3" r="2.100"/><circle cx="1807.9" cy="928.9" r="2.100"/></svg>
<div id="sb"><div style="position:absolute;left:4px;top:25px;width:1px;height:173px;background:#7f7f7f"></div><div style="position:absolute;left:3px;top:12px;width:2px;height:3px;background:#8a8a8a;border-radius:1px 0 0 1px"></div><div style="position:absolute;left:3px;top:875px;width:2px;height:3px;background:#8a8a8a;border-radius:1px 0 0 1px"></div></div>
<div id="chat"><div style="position:absolute;left:19px;top:19px;width:37px;height:37px;background:rgba(255,255,255,.025)"></div><svg viewBox="1818 877 75 75" style="position:absolute;left:0;top:0;width:75px;height:75px;fill:none;stroke:#fff;stroke-width:2.3;stroke-linecap:round;stroke-linejoin:round"><path d="M1841 929.800V906.200a2.600 2.600 0 0 1 2.600-2.600H1864.700a2.600 2.600 0 0 1 2.600 2.600V921.200a2.600 2.600 0 0 1-2.600 2.600H1847.300Z"/><path d="M1849 898.700H1869.800a2.700 2.700 0 0 1 2.700 2.700V915.600"/></svg></div>

</body>
</html>
